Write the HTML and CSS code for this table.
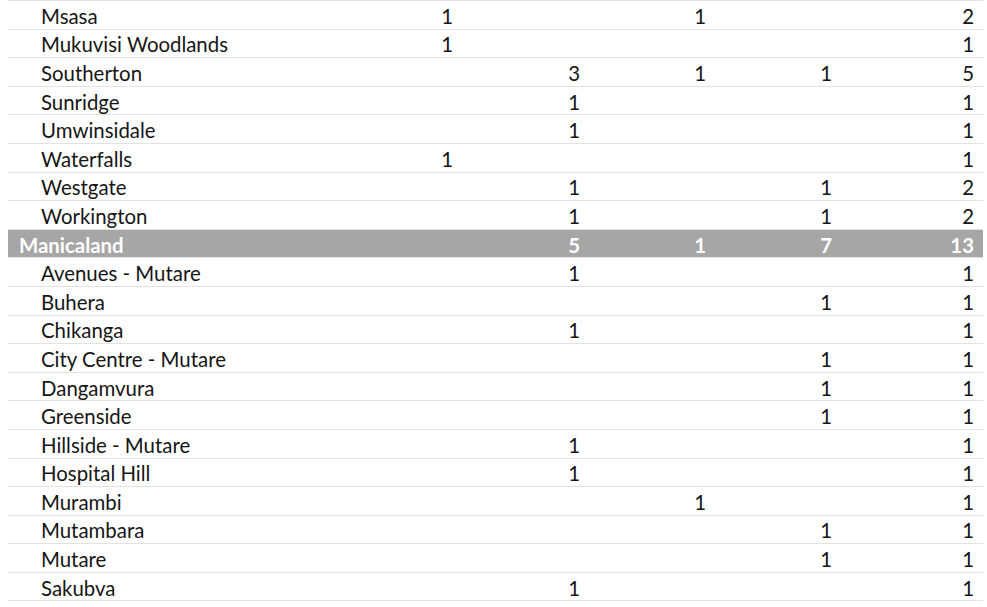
FILE: index.html
```html
<!DOCTYPE html>
<html>
<head>
<meta charset="utf-8">
<link rel="stylesheet" href="styles.css">
</head>
<body>
<div class="report">
  <div class="row"><span class="name">Msasa</span><span>1</span><span></span><span>1</span><span></span><span>2</span></div>
  <div class="row"><span class="name">Mukuvisi Woodlands</span><span>1</span><span></span><span></span><span></span><span>1</span></div>
  <div class="row"><span class="name">Southerton</span><span></span><span>3</span><span>1</span><span>1</span><span>5</span></div>
  <div class="row"><span class="name">Sunridge</span><span></span><span>1</span><span></span><span></span><span>1</span></div>
  <div class="row"><span class="name">Umwinsidale</span><span></span><span>1</span><span></span><span></span><span>1</span></div>
  <div class="row"><span class="name">Waterfalls</span><span>1</span><span></span><span></span><span></span><span>1</span></div>
  <div class="row"><span class="name">Westgate</span><span></span><span>1</span><span></span><span>1</span><span>2</span></div>
  <div class="row"><span class="name">Workington</span><span></span><span>1</span><span></span><span>1</span><span>2</span></div>
  <div class="row group"><span class="name">Manicaland</span><span></span><span>5</span><span>1</span><span>7</span><span>13</span></div>
  <div class="row"><span class="name">Avenues - Mutare</span><span></span><span>1</span><span></span><span></span><span>1</span></div>
  <div class="row"><span class="name">Buhera</span><span></span><span></span><span></span><span>1</span><span>1</span></div>
  <div class="row"><span class="name">Chikanga</span><span></span><span>1</span><span></span><span></span><span>1</span></div>
  <div class="row"><span class="name">City Centre - Mutare</span><span></span><span></span><span></span><span>1</span><span>1</span></div>
  <div class="row"><span class="name">Dangamvura</span><span></span><span></span><span></span><span>1</span><span>1</span></div>
  <div class="row"><span class="name">Greenside</span><span></span><span></span><span></span><span>1</span><span>1</span></div>
  <div class="row"><span class="name">Hillside - Mutare</span><span></span><span>1</span><span></span><span></span><span>1</span></div>
  <div class="row"><span class="name">Hospital Hill</span><span></span><span>1</span><span></span><span></span><span>1</span></div>
  <div class="row"><span class="name">Murambi</span><span></span><span></span><span>1</span><span></span><span>1</span></div>
  <div class="row"><span class="name">Mutambara</span><span></span><span></span><span></span><span>1</span><span>1</span></div>
  <div class="row"><span class="name">Mutare</span><span></span><span></span><span></span><span>1</span><span>1</span></div>
  <div class="row"><span class="name">Sakubva</span><span></span><span>1</span><span></span><span></span><span>1</span></div>
</div>
</body>
</html>
```
FILE: styles.css
```css
html, body {
  margin: 0;
  background: #ffffff;
}
body {
  padding: 0 8px;
  font-family: Lato, "Open Sans", sans-serif;
  font-size: 20.4px;
  color: #161616;
}
.report {
  width: 975px;
  border-top: 1px solid #e2e2e2;
}
.row {
  display: grid;
  grid-template-columns: 327px 127px 127px 126px 126px 142px;
  height: 28.6px;
  box-sizing: border-box;
  border-bottom: 1px solid #e2e2e2;
  align-items: center;
}
.row span {
  text-align: right;
  padding-right: 9px;
  line-height: 22px;
  padding-top: 2px;
}
.row .name {
  text-align: left;
  padding-left: 33px;
  padding-right: 0;
}
.row.group {
  background: #a6a6a6;
  color: #ffffff;
  font-weight: bold;
}
.row.group .name {
  padding-left: 11px;
}
```
